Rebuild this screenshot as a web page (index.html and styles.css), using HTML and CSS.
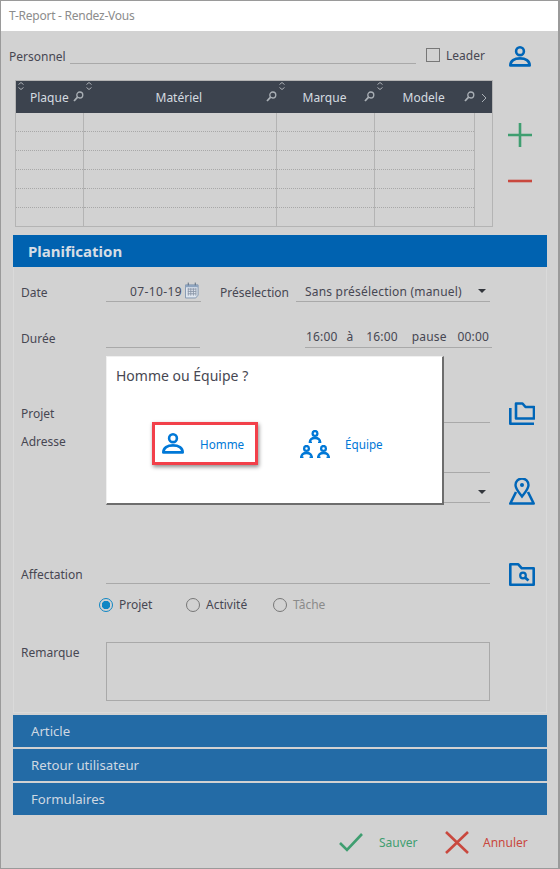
FILE: index.html
```html
<!DOCTYPE html>
<html lang="fr">
<head>
    <meta charset="UTF-8">
    <meta name="viewport" content="width=device-width, initial-scale=1.0">
    <title>T-Report - Rendez-Vous</title>
    <link rel="stylesheet" href="styles.css">
</head>
<body>
    <svg class="defs" width="0" height="0">
        <symbol id="i-person" viewBox="0 0 22 21">
            <circle cx="11" cy="5.2" r="3.9" fill="none" stroke="currentColor" stroke-width="2.6"/>
            <path d="M1.4 19.4C1.4 15 5.500 12.400 11 12.400s9.600 2.600 9.600 7z" fill="none" stroke="currentColor" stroke-width="2.800" stroke-linejoin="round"/>
        </symbol>
        <symbol id="i-mini" viewBox="0 0 13 13">
            <circle cx="6.500" cy="3.400" r="2.400" fill="none" stroke="currentColor" stroke-width="2.300"/>
            <path d="M1.200 12.500C1.400 9.500 3.500 8 6.500 8s5.100 1.500 5.300 4.500" fill="none" stroke="currentColor" stroke-width="2.300"/>
            <path d="M0 12.200h3.500M9.500 12.200h3.500" stroke="currentColor" stroke-width="1.600"/>
        </symbol>
        <symbol id="i-search" viewBox="0 0 11 11">
            <circle cx="6.800" cy="4" r="3" fill="none" stroke="currentColor" stroke-width="1.300"/>
            <path d="M4.600 6.200L1 10" stroke="currentColor" stroke-width="1.800"/>
        </symbol>
        <symbol id="i-sort" viewBox="0 0 6 8">
            <path d="M.5 2.500L3 .5l2.500 2M.5 5.500L3 7.500l2.500-2" fill="none" stroke="currentColor" stroke-width=".8"/>
        </symbol>
    </svg>

    <div class="window">
        <div class="titlebar">T-Report - Rendez-Vous</div>

        <div class="personnel">
            <span class="personnel-label">Personnel</span>
            <span class="personnel-field"></span>
            <span class="checkbox"></span>
            <span class="leader">Leader</span>
            <svg class="icon-person"><use href="#i-person"/></svg>
        </div>

        <div class="table-row">
            <table class="grid">
                <colgroup>
                    <col class="col-a"><col class="col-b"><col class="col-c"><col class="col-d"><col class="col-e">
                </colgroup>
                <thead>
                    <tr>
                        <th class="th-plaque"><svg class="sort"><use href="#i-sort"/></svg>Plaque<svg class="lens"><use href="#i-search"/></svg></th>
                        <th class="th-materiel"><svg class="sort"><use href="#i-sort"/></svg>Matériel<svg class="lens"><use href="#i-search"/></svg></th>
                        <th class="th-marque"><svg class="sort"><use href="#i-sort"/></svg>Marque<svg class="lens"><use href="#i-search"/></svg></th>
                        <th class="th-modele"><svg class="sort"><use href="#i-sort"/></svg>Modele<svg class="lens"><use href="#i-search"/></svg></th>
                        <th class="th-more">
                            <svg class="more" viewBox="0 0 6 10"><path d="M1 1l4 4-4 4" fill="none" stroke="currentColor"/></svg>
                        </th>
                    </tr>
                </thead>
                <tbody>
                    <tr><td></td><td></td><td></td><td></td><td></td></tr>
                    <tr><td></td><td></td><td></td><td></td><td></td></tr>
                    <tr><td></td><td></td><td></td><td></td><td></td></tr>
                    <tr><td></td><td></td><td></td><td></td><td></td></tr>
                    <tr><td></td><td></td><td></td><td></td><td></td></tr>
                    <tr><td></td><td></td><td></td><td></td><td></td></tr>
                </tbody>
            </table>
            <div class="tools">
                <svg class="tool tool-add" viewBox="0 0 24 24"><path d="M12 0v24M0 12h24" stroke="currentColor" stroke-width="2.600"/></svg>
                <svg class="tool tool-remove" viewBox="0 0 24 24"><path d="M0 12h24" stroke="currentColor" stroke-width="2.600"/></svg>
            </div>
        </div>

        <div class="sections">
            <div class="panel">
                <div class="panel-head">Planification</div>
                <div class="panel-body">
                    <div class="row row-date">
                        <span class="label">Date</span>
                        <span class="field field-date">07-10-19
                            <svg class="calendar" viewBox="0 0 15 17">
                                <path d="M.5 2.500h13.500v11l-2.500 3h-11z" fill="#dfe6ef" stroke="#7f93ad"/>
                                <path d="M.5 2.500h13.500v2.500h-13.500z" fill="#8ea4bf"/>
                                <path d="M3 7h9M3 9.500h9M3 12h9M3.500 6v8M6.200 6v8M9 6v8M11.700 6v8" stroke="#8b97a8"/>
                                <path d="M3.500 0v3M11 0v3" stroke="#56677c"/>
                            </svg>
                        </span>
                        <span class="label-pre">Préselection</span>
                        <span class="field field-select">Sans présélection (manuel)<i class="arrow"></i></span>
                    </div>
                    <div class="row row-duree">
                        <span class="label">Durée</span>
                        <span class="field field-duree"></span>
                        <span class="field field-times">
                            <span>16:00</span><span>à</span><span>16:00</span><span>pause</span><span>00:00</span>
                        </span>
                    </div>
                    <div class="row row-projet">
                        <span class="label">Projet</span>
                        <span class="field field-wide"></span>
                        <svg class="side-icon" viewBox="0 0 26 23">
                            <path d="M1.300 6v15.700H25M7 16.500V1.500h6.500l3 3.500H25v11.500z" fill="none" stroke="currentColor" stroke-width="2.600" stroke-linejoin="round"/>
                        </svg>
                    </div>
                    <div class="row row-adresse">
                        <span class="label">Adresse</span>
                        <div class="adresse-lines">
                            <span class="field field-wide line-street"></span>
                            <span class="field field-wide line-city"><i class="arrow"></i></span>
                        </div>
                        <svg class="side-icon icon-pin" viewBox="0 0 26 27">
                            <path d="M13 18.500c-3-4-6.500-7.500-6.500-11.500a6.500 6.500 0 0 1 13 0c0 4-3.500 7.500-6.500 11.500z" fill="none" stroke="currentColor" stroke-width="2.400"/>
                            <circle cx="13" cy="7" r="2" fill="currentColor"/>
                            <path d="M7 14L1.300 25.500h23.400L19 14" fill="none" stroke="currentColor" stroke-width="2.600" stroke-linejoin="round"/>
                        </svg>
                    </div>
                    <div class="row row-affectation">
                        <span class="label">Affectation</span>
                        <span class="field field-wide"></span>
                        <svg class="side-icon" viewBox="0 0 26 23">
                            <path d="M1.300 21.700V1.300h8l3.500 4H24.700v16.400z" fill="none" stroke="currentColor" stroke-width="2.600" stroke-linejoin="round"/>
                            <circle cx="14" cy="12.500" r="2.800" fill="none" stroke="currentColor" stroke-width="2.200"/>
                            <path d="M16 14.500l3.500 3" stroke="currentColor" stroke-width="2.800"/>
                        </svg>
                    </div>
                    <div class="radios">
                        <span class="radio radio-on"><i></i>Projet</span>
                        <span class="radio"><i></i>Activité</span>
                        <span class="radio radio-off"><i></i>Tâche</span>
                    </div>
                    <div class="row row-remarque">
                        <span class="label">Remarque</span>
                        <span class="textarea"></span>
                    </div>
                </div>
            </div>
            <div class="bar">Article</div>
            <div class="bar">Retour utilisateur</div>
            <div class="bar">Formulaires</div>
        </div>

        <div class="footer">
            <svg class="foot-icon foot-ok" viewBox="0 0 24 20"><path d="M1 11l7 7L23 2" fill="none" stroke="currentColor" stroke-width="2.600"/></svg>
            <span class="foot-save">Sauver</span>
            <svg class="foot-icon foot-no" viewBox="0 0 24 23"><path d="M1 1l22 21M23 1L1 22" fill="none" stroke="currentColor" stroke-width="2.600"/></svg>
            <span class="foot-cancel">Annuler</span>
        </div>

        <div class="dialog">
            <div class="dialog-title">Homme ou Équipe ?</div>
            <div class="dialog-choices">
                <div class="choice choice-selected">
                    <svg class="icon-person"><use href="#i-person"/></svg>
                    <span>Homme</span>
                </div>
                <div class="choice choice-team">
                    <svg class="icon-team" viewBox="0 0 30 28">
                        <use href="#i-mini" x="8.500" y="0" width="13" height="13"/>
                        <use href="#i-mini" x="0" y="15" width="13" height="13"/>
                        <use href="#i-mini" x="17" y="15" width="13" height="13"/>
                    </svg>
                    <span>Équipe</span>
                </div>
            </div>
        </div>
    </div>
</body>
</html>
```

FILE: styles.css
```css
* {
    box-sizing: border-box;
}
body {
    margin: 0;
    font-family: "Noto Sans", "Open Sans", sans-serif;
    font-size: 12px;
    color: #474752;
}
.defs {
    position: absolute;
}
.window {
    position: relative;
    width: 560px;
    height: 869px;
    background-color: #d2d2d2;
    border: 1px solid #9a9a9a;
    border-right-width: 2px;
}
.titlebar {
    height: 30px;
    background-color: #fff;
    color: #8c8c8c;
    padding: 6px 8px 0;
    line-height: 18px;
    letter-spacing: -0.25px;
}

/* top row */
.personnel {
    display: flex;
    align-items: center;
    height: 21px;
    margin-top: 15px;
    padding-left: 8px;
}
.personnel-label {
    width: 61px;
}
.personnel-field {
    width: 346px;
    height: 18px;
    margin-bottom: 3px;
    border-bottom: 1px solid #a9a9a9;
}
.checkbox {
    width: 14px;
    height: 14px;
    margin-left: 10px;
    margin-bottom: 3px;
    border: 1px solid #777;
}
.leader {
    width: 63px;
    margin-left: 6px;
    margin-bottom: 2px;
}
.icon-person {
    width: 22px;
    height: 21px;
    color: #0066b8;
}

/* grid */
.table-row {
    display: flex;
    margin-top: 13px;
    padding-left: 14px;
}
.grid {
    width: 478px;
    height: 147px;
    table-layout: fixed;
    border-collapse: collapse;
    border: 1px solid #b4b4b4;
}
.col-a { width: 68px; }
.col-b { width: 193px; }
.col-c { width: 98px; }
.col-d { width: 100px; }
.grid th {
    position: relative;
    height: 32px;
    padding: 2px 0 0;
    background-color: #3c434e;
    color: #d4dbe0;
    font-weight: normal;
    text-align: left;
}
.th-plaque { padding-left: 14px !important; }
.th-materiel { padding-left: 72px !important; }
.th-marque { padding-left: 26px !important; }
.th-modele { padding-left: 28px !important; }
.lens {
    position: absolute;
    top: 10px;
    right: 0;
    width: 11px;
    height: 11px;
    color: #aab0b6;
}
.sort {
    position: absolute;
    top: 1px;
    left: 2px;
    width: 6px;
    height: 8px;
    color: #c8ccd0;
}
.more {
    display: block;
    width: 6px;
    height: 10px;
    margin-left: 6px;
    color: #aab0b6;
}
.grid td {
    height: 19px;
    padding: 0;
    border-left: 1px solid #b4b4b4;
    border-bottom: 1px dotted #a8a8a8;
}
.grid tr:last-child td,
.grid td:last-child {
    border-bottom: none;
}
.tools {
    display: flex;
    flex-direction: column;
    gap: 22px;
    margin-left: 15px;
    padding-top: 43px;
}
.tool {
    width: 24px;
    height: 24px;
}
.tool-add { color: #3f9e70; }
.tool-remove { color: #c9483e; }

/* sections */
.sections {
    display: flex;
    flex-direction: column;
    gap: 2px;
    width: 534px;
    margin: 8px 0 0 12px;
}
.panel-head {
    height: 32px;
    padding: 1px 0 0 15px;
    background-color: #0062b0;
    color: #d6dde5;
    font-size: 15px;
    font-weight: bold;
    line-height: 31px;
}
.panel-body {
    height: 446px;
    padding: 15px 0 0 7px;
    border: 1px solid #dadada;
    border-top: none;
}
.row {
    display: flex;
}
.label {
    width: 85px;
    line-height: 22px;
}
.field {
    display: block;
    height: 20px;
    line-height: 18px;
    border-bottom: 1px solid #a9a9a9;
}
.row-date {
    height: 20px;
}
.field-date {
    display: flex;
    justify-content: flex-end;
    gap: 3px;
    width: 95px;
    padding-right: 2px;
    line-height: 20px;
    letter-spacing: 0.4px;
}
.calendar {
    width: 14px;
    height: 17px;
}
.label-pre {
    width: 76px;
    margin-left: 19px;
    line-height: 22px;
}
.field-select {
    position: relative;
    width: 194px;
    padding-left: 9px;
    line-height: 20px;
    letter-spacing: 0.2px;
}
.arrow {
    position: absolute;
    top: 7px;
    right: 4px;
    border-top: 4px solid #33363c;
    border-left: 4px solid transparent;
    border-right: 4px solid transparent;
}
.row-duree {
    height: 20px;
    margin-top: 26px;
}
.field-duree {
    width: 94px;
}
.field-times {
    display: flex;
    gap: 9px;
    width: 187px;
    margin-left: 105px;
    padding-left: 1px;
    letter-spacing: 0.15px;
}
.field-times span:nth-child(3) {
    margin-left: 4px;
}
.field-times span:nth-child(4) {
    margin-left: 5px;
}
.field-times span:nth-child(5) {
    margin-left: 2px;
}
.field-wide {
    position: relative;
    width: 384px;
}
.side-icon {
    width: 26px;
    height: 23px;
    margin: -1px 0 0 19px;
    color: #0066b8;
}
.row-projet {
    margin-top: 55px;
}
.row-adresse {
    margin-top: 6px;
    height: 73px;
}
.line-street {
    height: 21px;
    margin-top: 21px;
}
.line-city {
    height: 30px;
}
.line-city .arrow {
    top: 17px;
}
.icon-pin {
    height: 27px;
    margin-top: 47px;
}
.row-affectation {
    margin-top: 60px;
}
.radios {
    display: flex;
    margin-top: 9px;
    padding-left: 78px;
    line-height: 20px;
}
.radio {
    display: flex;
    align-items: center;
    width: 87px;
}
.radio i {
    width: 14px;
    height: 14px;
    margin-right: 6px;
    border: 1px solid #777;
    border-radius: 50%;
}
.radio-on i {
    border-color: #0f86c4;
    background: radial-gradient(circle, #0f86c4 4px, transparent 4.500px);
}
.radio-off {
    color: #8a8a8a;
}
.row-remarque {
    margin-top: 27px;
}
.textarea {
    width: 384px;
    height: 59px;
    border: 1px solid #a9a9a9;
}
.bar {
    height: 32px;
    padding-left: 18px;
    background-color: #236ba6;
    color: #cfd8e2;
    font-size: 13.2px;
    line-height: 33px;
}

/* bottom buttons */
.footer {
    display: flex;
    align-items: center;
    margin-top: 15px;
    padding-left: 338px;
    height: 24px;
}
.foot-icon {
    flex: none;
}
.foot-ok {
    width: 24px;
    height: 20px;
    color: #3f9e70;
}
.foot-save {
    width: 66px;
    margin-left: 16px;
    color: #3f9e70;
}
.foot-no {
    width: 24px;
    height: 23px;
    color: #c9483e;
}
.foot-cancel {
    margin-left: 14px;
    color: #c9483e;
}

/* popup over the form */
.dialog {
    position: absolute;
    top: 355px;
    left: 105px;
    width: 338px;
    height: 149px;
    background-color: #fff;
    border-top: 1px solid #f0f0f0;
    border-right: 2px solid #6d6d6d;
    border-bottom: 2px solid #6d6d6d;
    border-left: 1px solid #f0f0f0;
}
.dialog-title {
    padding: 10px 0 0 9px;
    font-size: 14px;
    line-height: 18px;
}
.dialog-choices {
    display: flex;
    align-items: center;
    margin: 37px 0 0 45px;
    font-size: 11.7px;
}
.choice {
    display: flex;
    align-items: center;
    color: #0078d7;
}
.choice-selected {
    width: 106px;
    height: 43px;
    padding-left: 7px;
    gap: 16px;
    border: 3px solid #f2404a;
    box-shadow: 1px 2px 4px rgba(0, 0, 0, 0.45);
}
.choice-selected .icon-person {
    color: #0078d7;
}
.choice-team {
    gap: 15px;
    margin-left: 42px;
}
.icon-team {
    width: 30px;
    height: 28px;
}
```
